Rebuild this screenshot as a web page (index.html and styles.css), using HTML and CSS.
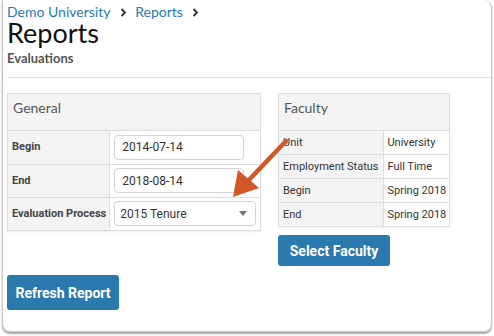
FILE: index.html
```html
<!DOCTYPE html>
<html lang="en">
<head>
    <meta charset="UTF-8">
    <title>Reports - Evaluations</title>
    <link rel="stylesheet" href="styles.css">
</head>
<body>
    <div class="window">
        <div class="crumbs">
            <a href="#">Demo University</a>
            <svg class="sep" width="7" height="9" viewBox="0 0 7 9"><path d="M1.5 1 L5 4.5 L1.5 8" fill="none" stroke="#333" stroke-width="1.9"/></svg>
            <a href="#">Reports</a>
            <svg class="sep" width="7" height="9" viewBox="0 0 7 9"><path d="M1.5 1 L5 4.5 L1.5 8" fill="none" stroke="#333" stroke-width="1.9"/></svg>
        </div>
        <h1>Reports</h1>
        <div class="subtitle">Evaluations</div>
        <hr>

        <div class="panels">
            <div class="panel general">
                <div class="panel-head">General</div>
                <table>
                    <tr>
                        <th>Begin</th>
                        <td><input class="field" type="text" value="2014-07-14"></td>
                    </tr>
                    <tr>
                        <th>End</th>
                        <td><input class="field" type="text" value="2018-08-14"></td>
                    </tr>
                    <tr>
                        <th>Evaluation Process</th>
                        <td>
                            <div class="select">
                                <span>2015 Tenure</span>
                                <span class="caret"></span>
                            </div>
                        </td>
                    </tr>
                </table>
            </div>

            <div class="side">
                <div class="panel faculty">
                    <div class="panel-head">Faculty</div>
                    <table>
                        <tr><th>Unit</th><td>University</td></tr>
                        <tr><th>Employment Status</th><td>Full Time</td></tr>
                        <tr><th>Begin</th><td>Spring 2018</td></tr>
                        <tr><th>End</th><td>Spring 2018</td></tr>
                    </table>
                </div>
                <button class="btn select-btn">Select Faculty</button>
            </div>
        </div>

        <button class="btn refresh-btn">Refresh Report</button>

        <!-- callout arrow drawn over the form -->
        <svg class="arrow" width="60" height="64" viewBox="0 0 60 64">
            <line x1="55" y1="3" x2="16" y2="44" stroke="#d4572a" stroke-width="4.5" stroke-linecap="round"/>
            <polygon points="2,59 7,32 28,50" fill="#d4572a"/>
        </svg>
    </div>
</body>
</html>
```

FILE: styles.css
```css
body {
    margin: 0;
    padding: 0 2px 4px;
    background: #fff;
    font-family: Roboto, "Liberation Sans", sans-serif;
    color: #333;
}

.window {
    position: relative;
    box-sizing: border-box;
    height: 332px;
    padding: 3px 0 0 4px;
    border: 1px solid #c9c9c9;
    border-top: none;
    border-radius: 0 8px 8px 8px;
    box-shadow: 0 2px 2px rgba(0,0,0,0.35);
    background: #fff;
}

.crumbs {
    height: 17px;
    font-family: Lato, sans-serif;
    font-size: 14px;
    line-height: 17px;
    color: #2a79b5;
}

.crumbs a {
    color: #2a79b5;
    text-decoration: none;
}

.crumbs .sep {
    margin: 0 5px 0 6px;
}

h1 {
    margin: 0;
    height: 26px;
    font-family: Lato, sans-serif;
    font-weight: normal;
    font-size: 27px;
    line-height: 26px;
    color: #111;
}

.subtitle {
    margin-top: 4px;
    font-family: Lato, sans-serif;
    font-weight: bold;
    font-size: 13px;
    line-height: 16px;
    color: #555;
}

hr {
    margin: 11px 0 15px;
    border: none;
    border-top: 1px solid #e2e2e2;
}

.panels {
    display: flex;
    align-items: flex-start;
    gap: 17px;
}

.panel {
    border: 1px solid #dedede;
    box-shadow: 0 1px 2px rgba(0,0,0,0.06);
}

.panel-head {
    height: 36px;
    line-height: 28px;
    padding: 0 5px;
    background: #f4f4f4;
    border-bottom: 1px solid #dedede;
    font-family: Lato, sans-serif;
    font-size: 14px;
    color: #555;
}

table {
    border-collapse: collapse;
    font-size: 11px;
}

th {
    text-align: left;
    background: #f4f4f4;
    color: #444;
    white-space: nowrap;
}

tr + tr th,
tr + tr td {
    border-top: 1px solid #dedede;
}

td {
    border-left: 1px solid #dedede;
    background: #fff;
}

.general {
    width: 252px;
}

.general table {
    width: 100%;
}

.general th {
    box-sizing: border-box;
    width: 101px;
    height: 33px;
    padding: 9px 3px 0 4px;
    vertical-align: top;
}

.general td {
    padding: 0 4px;
}

.field {
    display: block;
    box-sizing: border-box;
    width: 130px;
    height: 25px;
    padding: 0 7px;
    border: 1px solid #d4d4d4;
    border-radius: 4px;
    font-family: Roboto, sans-serif;
    font-size: 12px;
    color: #333;
}

.select {
    box-sizing: border-box;
    width: 142px;
    height: 25px;
    padding: 0 5px;
    border: 1px solid #d4d4d4;
    border-radius: 4px;
    display: flex;
    align-items: center;
    justify-content: space-between;
    font-size: 12px;
}

.caret {
    width: 0;
    height: 0;
    border-left: 4px solid transparent;
    border-right: 4px solid transparent;
    border-top: 5px solid #777;
    margin-right: 3px;
}

.side {
    display: flex;
    flex-direction: column;
    align-items: flex-start;
    gap: 8px;
}

.faculty {
    width: fit-content;
}

.faculty th {
    height: 23px;
    padding: 0 5px 0 4px;
    font-weight: normal;
    color: #333;
}

.faculty td {
    padding: 0 3px;
    white-space: nowrap;
    color: #333;
}

.btn {
    border: none;
    border-radius: 3px;
    background: #2a7aaf;
    color: #fff;
    font-family: Roboto, sans-serif;
    font-weight: bold;
    font-size: 14px;
    cursor: pointer;
}

.select-btn {
    width: 112px;
    height: 31px;
}

.refresh-btn {
    display: block;
    margin-top: 9px;
    width: 112px;
    height: 35px;
}

.arrow {
    position: absolute;
    left: 228px;
    top: 138px;
}
```
